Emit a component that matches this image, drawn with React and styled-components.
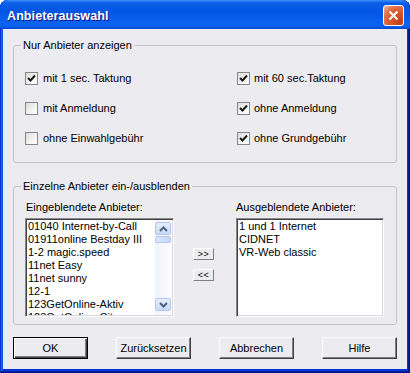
import React from "react";
import styled, { createGlobalStyle } from "styled-components";

const GlobalStyle = createGlobalStyle`
  html, body {
    margin: 0;
    padding: 0;
    background: #ffffff;
  }
  body {
    font-family: "Liberation Sans", Arial, sans-serif;
    font-size: 11px;
    color: #000;
  }
`;

const Window = styled.div`
  width: 410px;
  height: 373px;
  box-sizing: border-box;
  display: flex;
  flex-direction: column;
  background: #0831d9;
  border-radius: 8px 8px 0 0;
  overflow: hidden;
  box-shadow: inset -1px -1px #00138c, inset 1px 1px #0831d9,
    inset -2px -2px #001ea0, inset 2px 2px #166aee, inset -3px -3px #003bda,
    inset 3px 3px #0855dd;
`;

const TitleBar = styled.div`
  height: 29px;
  flex: none;
  display: flex;
  align-items: center;
  justify-content: space-between;
  padding: 0 6px 0 7px;
  background: linear-gradient(
    180deg,
    #3d8ff7 0%,
    #0a5ee6 10%,
    #0456e4 40%,
    #0b64f0 85%,
    #0a5ae8 93%,
    #0444c8 100%
  );
  border-radius: 8px 8px 0 0;
`;

const TitleText = styled.div`
  color: #fff;
  font-weight: bold;
  font-size: 12.5px;
  letter-spacing: 0.1px;
  text-shadow: 1px 1px #0f1089;
  margin-top: 2px;
`;

const CloseButton = styled.div`
  width: 21px;
  height: 21px;
  box-sizing: border-box;
  border: 1px solid #fff;
  border-radius: 3px;
  background: radial-gradient(
    circle at 85% 85%,
    #c43d12 0%,
    #d9582a 45%,
    #e0714a 70%,
    #f1b7a0 100%
  );
  display: flex;
  align-items: center;
  justify-content: center;
  margin-top: 2px;
`;

const Client = styled.div`
  flex: 1;
  margin: 0 3px 4px;
  background: #ecebef;
  padding: 10px 10px 10px;
  display: flex;
  flex-direction: column;
`;

const Group = styled.fieldset`
  margin: ${(p) => (p.$first ? "0" : "17px 0 0")};
  padding: 0;
  border: 1px solid #c4c4c8;
  border-radius: 3px;
  min-width: 0;
`;

const Legend = styled.legend`
  margin-left: 7px;
  padding: 0 2px;
  line-height: 13px;
  font-size: 11px;
`;

const GroupBody = styled.div`
  padding: ${(p) => p.$pad};
`;

const CheckGrid = styled.div`
  display: grid;
  grid-template-columns: 212px 1fr;
  grid-auto-rows: 30px;
  align-items: center;
`;

const CheckRow = styled.label`
  display: flex;
  align-items: center;
  gap: ${(p) => (p.$right ? "4px" : "5px")};
  line-height: 13px;
`;

const Box = styled.span`
  width: 13px;
  height: 13px;
  box-sizing: border-box;
  border: 1px solid #85878b;
  background: linear-gradient(135deg, #dcdcd7 0%, #f4f4f2 60%, #fff 100%);
  display: flex;
  align-items: center;
  justify-content: center;
`;

const Lists = styled.div`
  display: grid;
  grid-template-columns: 149px 62px 148px;
  grid-template-rows: 13px 99px;
  row-gap: 4px;
`;

const ListLabel = styled.div`
  line-height: 13px;
  padding-left: ${(p) => (p.$right ? "0" : "1px")};
`;

const ListBox = styled.div`
  box-sizing: border-box;
  height: 99px;
  background: #fff;
  border: 1px solid;
  border-color: #8a8a8a #ffffff #ffffff #8a8a8a;
  box-shadow: inset 1px 1px #404040, inset -1px -1px #d8d8dc;
  padding: 1px;
  display: flex;
  overflow: hidden;
`;

const Items = styled.div`
  flex: 1;
  overflow: hidden;
  padding-left: 1px;
`;

const Item = styled.div`
  line-height: 13px;
  white-space: nowrap;
`;

const ScrollBar = styled.div`
  width: 17px;
  flex: none;
  display: flex;
  flex-direction: column;
  padding: 2px 1px 4px 0;
  box-sizing: border-box;
  background: linear-gradient(90deg, #eef2fb 0%, #fdfdff 100%);
`;

const ScrollButton = styled.div`
  height: 13px;
  box-sizing: border-box;
  border: 1px solid #b5c7ee;
  border-radius: 2px;
  background: linear-gradient(180deg, #e6eefd 0%, #c9d8f8 100%);
  display: flex;
  align-items: center;
  justify-content: center;
`;

const Thumb = styled.div`
  height: 7px;
  margin-top: 1px;
  box-sizing: border-box;
  border: 1px solid #b5c7ee;
  border-radius: 2px;
  background: linear-gradient(90deg, #dbe6fd 0%, #c4d5f8 100%);
`;

const Track = styled.div`
  flex: 1;
`;

const MoveButtons = styled.div`
  display: flex;
  flex-direction: column;
  align-items: flex-start;
  gap: 9px;
  padding: 30px 0 0 19px;
`;

const SmallButton = styled.div`
  width: 21px;
  height: 12px;
  box-sizing: border-box;
  border: 1px solid;
  border-color: #ffffff #808080 #808080 #ffffff;
  background: #ecebef;
  font-size: 9px;
  line-height: 10px;
  text-align: center;
  letter-spacing: 0.5px;
`;

const ButtonRow = styled.div`
  display: flex;
  justify-content: space-between;
  margin-top: 12px;
  padding: 0 0 0 0;
`;

const Button = styled.div`
  width: 75px;
  height: 22px;
  box-sizing: border-box;
  border: 1px solid;
  border-color: ${(p) =>
    p.$default ? "#000" : "#ffffff #404040 #404040 #ffffff"};
  box-shadow: ${(p) =>
    p.$default
      ? "inset 1px 1px #fff, inset -1px -1px #404040, inset -2px -2px #808080"
      : "inset -1px -1px #808080"};
  background: #ecebef;
  display: flex;
  align-items: center;
  justify-content: center;
  font-size: 11px;
`;

const checks = [
  { label: "mit 1 sec. Taktung", on: true },
  { label: "mit 60 sec.Taktung", on: true, right: true },
  { label: "mit Anmeldung", on: false },
  { label: "ohne Anmeldung", on: true, right: true },
  { label: "ohne Einwahlgebühr", on: false },
  { label: "ohne Grundgebühr", on: true, right: true },
];

const shown = [
  "01040 Internet-by-Call",
  "01911online Bestday III",
  "1-2 magic.speed",
  "11net Easy",
  "11net sunny",
  "12-1",
  "123GetOnline-Aktiv",
  "123GetOnline-City",
];

const hidden = ["1 und 1 Internet", "CIDNET", "VR-Web classic"];

function Check() {
  return (
    <svg width="9" height="9" viewBox="0 0 9 9">
      <path d="M1 4 L3.5 6.5 L8 1.5" fill="none" stroke="#1a1a1a" strokeWidth="2" />
    </svg>
  );
}

function Chevron({ down }) {
  return (
    <svg width="9" height="6" viewBox="0 0 9 6">
      <path
        d={down ? "M1 1 L4.5 4.5 L8 1" : "M1 5 L4.5 1.5 L8 5"}
        fill="none"
        stroke="#4d6185"
        strokeWidth="2"
      />
    </svg>
  );
}

export default function App() {
  return (
    <>
      <GlobalStyle />
      <Window>
        <TitleBar>
          <TitleText>Anbieterauswahl</TitleText>
          <CloseButton>
            <svg width="11" height="11" viewBox="0 0 11 11">
              <path d="M1.5 1.5 L9.5 9.5 M9.5 1.5 L1.5 9.5" stroke="#fff" strokeWidth="2" />
            </svg>
          </CloseButton>
        </TitleBar>
        <Client>
          <Group $first>
            <Legend>Nur Anbieter anzeigen</Legend>
            <GroupBody $pad="11px 11px 9px 11px">
              <CheckGrid>
                {checks.map((c) => (
                  <CheckRow key={c.label} $right={c.right}>
                    <Box>{c.on && <Check />}</Box>
                    {c.label}
                  </CheckRow>
                ))}
              </CheckGrid>
            </GroupBody>
          </Group>
          <Group>
            <Legend>Einzelne Anbieter ein-/ausblenden</Legend>
            <GroupBody $pad="8px 11px 7px 11px">
              <Lists>
                <ListLabel>Eingeblendete Anbieter:</ListLabel>
                <span />
                <ListLabel $right>Ausgeblendete Anbieter:</ListLabel>
                <ListBox>
                  <Items>
                    {shown.map((s) => (
                      <Item key={s}>{s}</Item>
                    ))}
                  </Items>
                  <ScrollBar>
                    <ScrollButton>
                      <Chevron />
                    </ScrollButton>
                    <Thumb />
                    <Track />
                    <ScrollButton>
                      <Chevron down />
                    </ScrollButton>
                  </ScrollBar>
                </ListBox>
                <MoveButtons>
                  <SmallButton>&gt;&gt;</SmallButton>
                  <SmallButton>&lt;&lt;</SmallButton>
                </MoveButtons>
                <ListBox>
                  <Items>
                    {hidden.map((s) => (
                      <Item key={s}>{s}</Item>
                    ))}
                  </Items>
                </ListBox>
              </Lists>
            </GroupBody>
          </Group>
          <ButtonRow>
            <Button $default>OK</Button>
            <Button>Zurücksetzen</Button>
            <Button>Abbrechen</Button>
            <Button>Hilfe</Button>
          </ButtonRow>
        </Client>
      </Window>
    </>
  );
}
